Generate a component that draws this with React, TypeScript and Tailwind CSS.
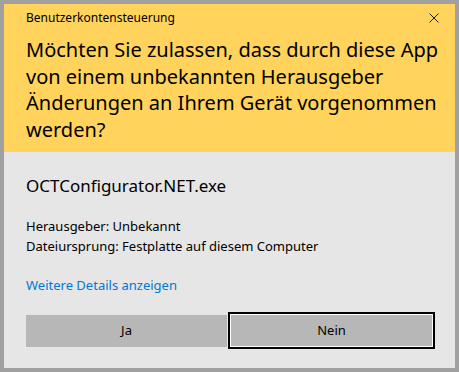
export default function App() {
  return (
    <div className="flex h-[372px] w-[459px] flex-col border-4 border-[#a0a0a0] font-['Noto_Sans',sans-serif] text-black">
      <div className="flex h-[148px] flex-col bg-[#ffd35c] pl-[22px] pr-[16px]">
        <div className="mt-[6px] flex items-center justify-between">
          <p className="text-[12px] leading-[16px]">Benutzerkontensteuerung</p>
          <svg width="10" height="10" viewBox="0 0 10 10">
            <path d="M0.5 0.5 L9.5 9.5 M9.5 0.5 L0.5 9.5" stroke="#1a1a1a" strokeWidth="1" fill="none" />
          </svg>
        </div>
        <h1 className="mt-[11px] text-[20px] leading-[26.67px] font-normal">
          Möchten Sie zulassen, dass durch diese App von einem unbekannten Herausgeber Änderungen an Ihrem Gerät
          vorgenommen werden?
        </h1>
      </div>
      <div className="flex flex-1 flex-col bg-[#e6e6e6] pl-[22px]">
        <p className="mt-[23px] text-[17px] leading-[22px]">OCTConfigurator.NET.exe</p>
        <div className="mt-[20px] text-[13px] leading-[19.5px]">
          <p>Herausgeber: Unbekannt</p>
          <p>Dateiursprung: Festplatte auf diesem Computer</p>
        </div>
        <a href="#" className="mt-[20px] text-[13px] leading-[19px] text-[#0078d7]">
          Weitere Details anzeigen
        </a>
        <div className="mt-[17px] flex items-start">
          <button type="button" className="mt-[3px] h-[32px] w-[201px] bg-[#b7b7b7] text-[13px]">
            Ja
          </button>
          <div className="ml-[1px] h-[37px] w-[207px] border-2 border-black">
            <button type="button" className="h-full w-full border border-white bg-[#b7b7b7] text-[13px]">
              Nein
            </button>
          </div>
        </div>
      </div>
    </div>
  )
}
